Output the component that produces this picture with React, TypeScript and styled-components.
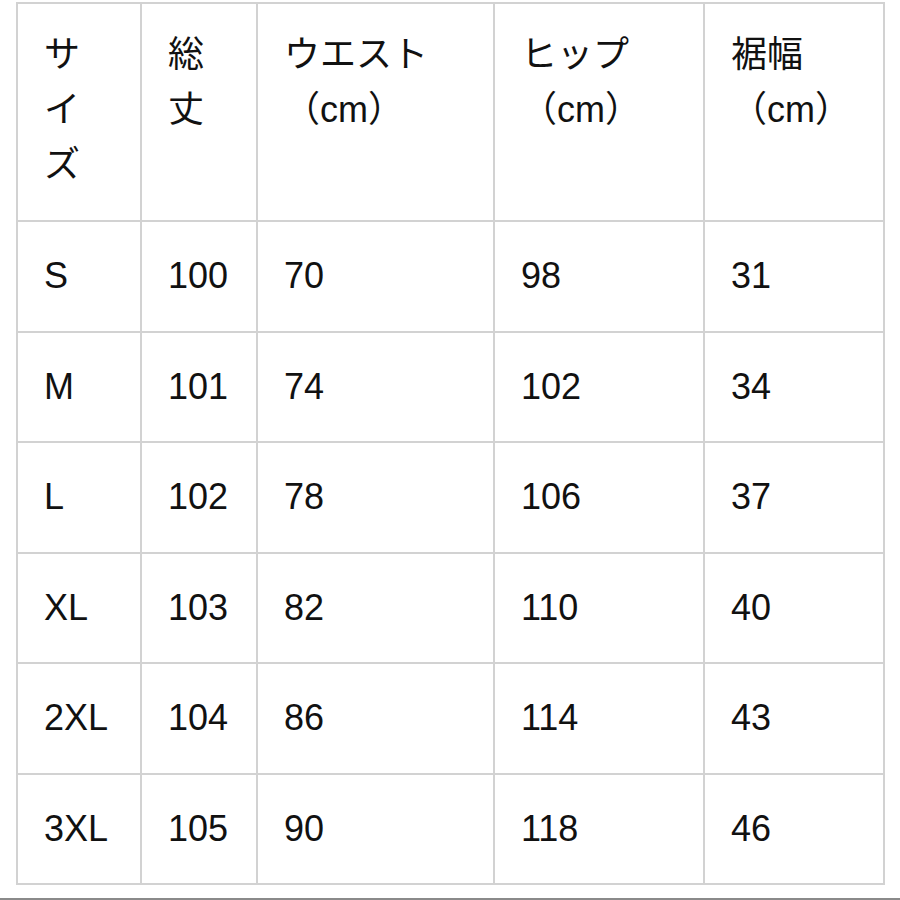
import React from "react";
import styled, { createGlobalStyle } from "styled-components";

const GlobalStyle = createGlobalStyle`
  html, body {
    margin: 0;
    padding: 0;
    background: #ffffff;
  }
  body {
    font-family: "Liberation Sans", "Noto Sans CJK JP", sans-serif;
    color: #111111;
  }
`;

interface SizeRow {
  size: string;
  length: number;
  waist: number;
  hip: number;
  hem: number;
}

const rows: SizeRow[] = [
  { size: "S", length: 100, waist: 70, hip: 98, hem: 31 },
  { size: "M", length: 101, waist: 74, hip: 102, hem: 34 },
  { size: "L", length: 102, waist: 78, hip: 106, hem: 37 },
  { size: "XL", length: 103, waist: 82, hip: 110, hem: 40 },
  { size: "2XL", length: 104, waist: 86, hip: 114, hem: 43 },
  { size: "3XL", length: 105, waist: 90, hip: 118, hem: 46 },
];

const colWidths = [124, 116, 237, 210, 180];

export default function App() {
  return (
    <Page>
      <GlobalStyle />
      <Table>
        <colgroup>
          {colWidths.map((w, i) => (
            <col key={i} style={{ width: w }} />
          ))}
        </colgroup>
        <thead>
          <tr>
            <HeadCell>サイズ</HeadCell>
            <HeadCell>総丈</HeadCell>
            <HeadCell>
              <Line>ウエスト</Line>
              <Line>（cm）</Line>
            </HeadCell>
            <HeadCell>
              <Line>ヒップ</Line>
              <Line>（cm）</Line>
            </HeadCell>
            <HeadCell>
              <Line>裾幅</Line>
              <Line>（cm）</Line>
            </HeadCell>
          </tr>
        </thead>
        <tbody>
          {rows.map((r) => (
            <tr key={r.size}>
              <Cell>{r.size}</Cell>
              <Cell>{r.length}</Cell>
              <Cell>{r.waist}</Cell>
              <Cell>{r.hip}</Cell>
              <Cell>{r.hem}</Cell>
            </tr>
          ))}
        </tbody>
      </Table>
      <BottomBar />
    </Page>
  );
}

const Page = styled.div`
  height: 900px;
  display: flex;
  flex-direction: column;
  padding: 2px 0 0 16px;
  box-sizing: border-box;
`;

const Table = styled.table`
  border-collapse: collapse;
  table-layout: fixed;
  width: 867px;
`;

const HeadCell = styled.th`
  height: 218px;
  box-sizing: border-box;
  border: 2px solid #d2d2d2;
  padding: 23px 32px 0 26px;
  vertical-align: top;
  text-align: left;
  font-weight: normal;
  font-size: 36px;
  line-height: 55px;
`;

const Line = styled.div`
  white-space: nowrap;
`;

const Cell = styled.td`
  height: 110.5px;
  box-sizing: border-box;
  border: 2px solid #d2d2d2;
  padding: 0 10px 0 26px;
  vertical-align: middle;
  font-size: 36px;
  line-height: 40px;
`;

const BottomBar = styled.div`
  margin-top: auto;
  margin-left: -16px;
  height: 2px;
  background: #8a8a8a;
`;
